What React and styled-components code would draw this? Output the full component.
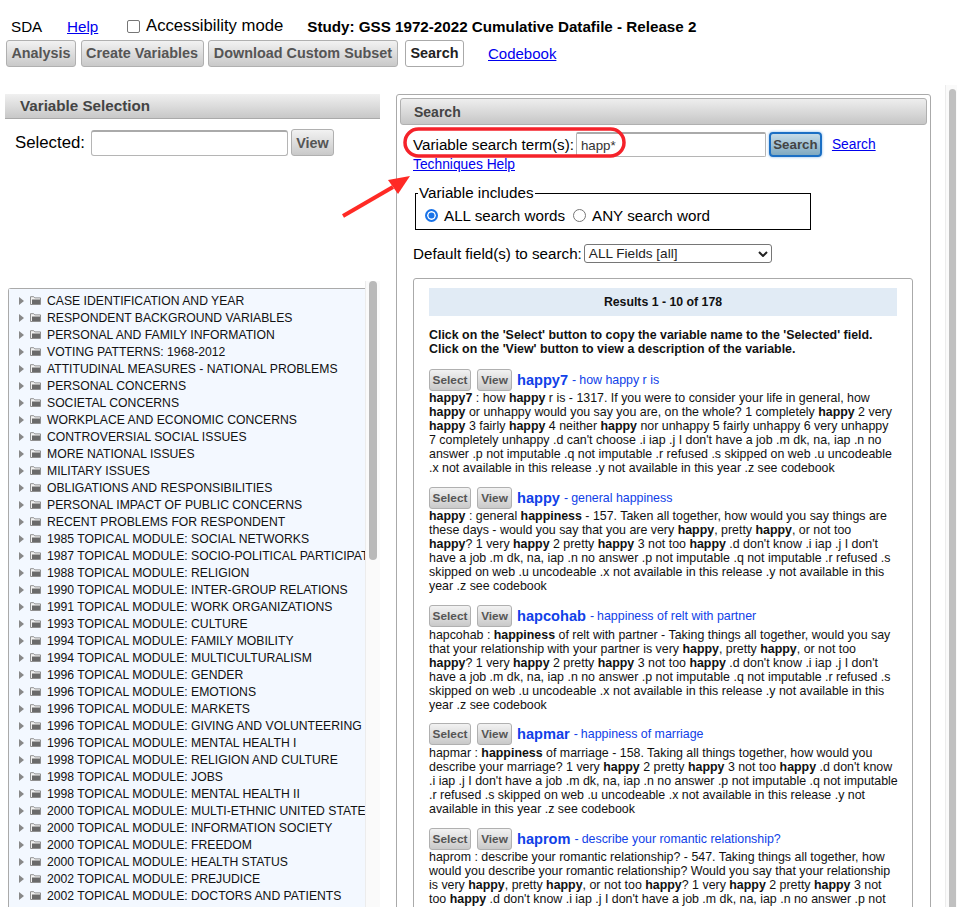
import React from 'react';
import styled, { createGlobalStyle } from 'styled-components';

const Global = createGlobalStyle`
  html, body { margin: 0; padding: 0; background: #fff; }
  body { font-family: "Liberation Sans", Arial, sans-serif; color: #000; }
  #root { width: 957px; height: 907px; overflow: hidden; }
`;
const Page = styled.div`
  position: relative; width: 957px; height: 907px; overflow: hidden; background: #fff;
`;
const TopLine = styled.div`
  display: flex; align-items: center; height: 20px; margin-top: 16px; padding-left: 11px; font-size: 15.2px;
`;
const Sda = styled.span` width: 56px; `;
const HelpLink = styled.a` color: #0000ee; text-decoration: underline; width: 60px; `;
const Check = styled.span`
  display: inline-block; width: 11px; height: 11px; border: 1px solid #767676; border-radius: 2px; background: #fff; margin-right: 6px;
`;
const AccessLabel = styled.span` font-size: 16.7px; `;
const Study = styled.b` margin-left: 24px; font-size: 15.2px; `;
const Tabs = styled.div`
  display: flex; align-items: center; margin-top: 3px; padding-left: 6px; gap: 4.5px; height: 28px;
`;
const GreyButton = styled.button`
  font-family: "Liberation Sans", Arial, sans-serif; font-weight: bold; color: #555; background: linear-gradient(#f2f2f2, #c9c9c9);
  border: 1px solid #b0b0b0; border-radius: 3px; padding: 0; margin: 0; white-space: nowrap;
  font-size: ${p => p.$fs || 14.4}px; width: ${p => p.$w}px; height: ${p => p.$h}px;
`;
const ActiveTab = styled(GreyButton)`
  background: #fff; color: #222; border-color: #aaa; margin-left: 2.5px;
`;
const CodebookLink = styled.a`
  color: #0000ee; text-decoration: underline; font-size: 15px; margin-left: 19.5px;
`;
const Columns = styled.div`
  display: flex; margin-top: 27px; align-items: flex-start;
`;
const Left = styled.div` width: 396px; flex: none; padding-left: 5px; box-sizing: border-box; `;
const Heading = styled.div`
  height: 25px; line-height: 24px; box-sizing: border-box; background: linear-gradient(#f0f0f0, #c8c8c8);
  border-bottom: 1px solid #aaa; font-size: 15.2px; font-weight: bold; color: #444; padding-left: 15px; width: 375px;
`;
const SelectedRow = styled.div`
  display: flex; align-items: center; margin-top: 10px; padding-left: 10px; height: 27px; font-size: 16.8px;
`;
const TextField = styled.span`
  display: inline-block; box-sizing: border-box; background: #fff; border: 1px solid #b5b5b5; border-top: 2px solid #aaa; border-radius: 3px;
  width: ${p => p.$w}px; height: ${p => p.$h}px; margin: 0 3px 0 6px;
`;
const Tree = styled.div`
  position: relative; margin-top: 132px; margin-left: 3px; width: 372px; height: 700px; box-sizing: border-box; display: flex;
  border: 1px solid #aaa; border-radius: 3px 0 0 0; border-right: none; border-bottom: none;
`;
const TreeList = styled.div`
  width: 357px; flex: none; background: #f3f8ff; padding-top: 3px; overflow: hidden; box-sizing: border-box;
`;
const TreeScroll = styled.div`
  position: absolute; top: -8px; right: 0; width: 15px; bottom: 0; background: #fafafa; border-left: 1px solid #ececec; box-sizing: border-box;
`;
const TreeThumb = styled.div`
  width: 8px; height: 279px; margin: 0 0 0 3px; border-radius: 4px; background: #b9b9b9;
`;
const TreeRow = styled.div`
  display: flex; align-items: center; height: 17px; white-space: nowrap; font-size: 12.2px; color: #111; padding-left: 10px;
`;
const Arrow = styled.span`
  width: 0; height: 0; border-left: 5px solid #888; border-top: 4px solid transparent; border-bottom: 4px solid transparent; margin-right: 6px; flex: none;
`;
const FolderSvg = styled.svg` flex: none; margin-right: 6px; `;
const Right = styled.div`
  width: 535px; flex: none; box-sizing: border-box; border: 1px solid #aaa; border-radius: 3px; padding: 3px; height: 850px; margin-top: 0;
`;
const SearchHeading = styled.div`
  height: 27px; line-height: 26px; box-sizing: border-box; background: linear-gradient(#eeeeee, #c6c6c6);
  border: 1px solid #b0b0b0; border-radius: 3px; font-size: 14px; font-weight: bold; color: #444; padding-left: 13px;
`;
const SearchBody = styled.div` padding: 0 13px; font-size: 15.2px; `;
const TermRow = styled.div`
  display: flex; align-items: center; height: 25px; margin-top: 7px;
`;
const TermInput = styled.span`
  display: block; box-sizing: border-box; width: 190px; height: 25px; margin-left: 2px; padding-left: 4px; line-height: 24px; font-size: 13.3px; color: #333;
  background: #fff; border: 1px solid #b5b5b5; border-top: 2px solid #aaa; border-radius: 2px;
`;
const FocusButton = styled(GreyButton)`
  margin-left: 3px; color: #444; background: linear-gradient(#c5dbe8, #7fa9c0); border: 2px solid #1b6fc4; box-shadow: 0 0 3px #7fb5ea; border-radius: 4px;
`;
const Link = styled.a` color: #0000ee; text-decoration: underline; font-size: 13.8px; `;
const SearchLink = styled(Link)` margin-left: 10px; `;
const TechniquesLine = styled.div` margin-top: -2px; `;
const Fieldset = styled.div`
  position: relative; box-sizing: border-box; width: 396px; height: 37px; margin: 21px 0 0 2px; border: 1px solid #000; display: flex; align-items: center; padding: 8px 0 0 9px;
`;
const Legend = styled.span`
  position: absolute; top: -9px; left: 2px; background: #fff; padding: 0 1px; line-height: 16px;
`;
const Radio = styled.span`
  display: inline-block; box-sizing: border-box; width: 13px; height: 13px; border-radius: 50%; margin-right: 6px; background: #fff;
  border: ${p => p.$on ? '2px solid #1a73e8' : '1px solid #767676'};
  box-shadow: ${p => p.$on ? 'inset 0 0 0 1.5px #fff' : 'none'};
  ${p => p.$on && 'background: #1a73e8;'}
`;
const RadioLabel = styled.span` margin-right: 8px; `;
const FieldRow = styled.div` display: flex; align-items: center; height: 19px; margin-top: 14px; `;
const SelectBox = styled.span`
  display: flex; align-items: center; justify-content: space-between; box-sizing: border-box; width: 188px; height: 19px; margin-left: 2px; padding: 0 3px 0 4px;
  font-size: 13.6px; border: 1px solid #767676; border-radius: 3px; background: #fff; color: #222;
`;
const Results = styled.div`
  margin-top: 15px; box-sizing: border-box; width: 500px; height: 640px; border: 1px solid #aaa; border-radius: 3px; padding: 9px 15px 0; font-size: 12.4px; line-height: 14px; color: #111;
`;
const ResultsBar = styled.div`
  background: #e1ebf5; height: 28px; line-height: 28px; text-align: center; font-weight: bold; font-size: 12.3px;
`;
const Intro = styled.div` margin-top: 12px; font-weight: bold; `;
const ResultBlock = styled.div` margin-top: ${p => p.$first ? 12 : 11.3}px; `;
const ResultHead = styled.div` display: flex; align-items: center; height: 23px; `;
const SelectBtn = styled(GreyButton)` margin-right: 6px; `;
const ViewBtn = styled(GreyButton)` margin-right: 5px; `;
const VarName = styled.b` color: #1041e8; font-size: 14.6px; `;
const VarDash = styled.span` color: #1041e8; margin: 0 3px 0 4px; `;
const VarDesc = styled.span` color: #1041e8; `;
const ResultText = styled.div` white-space: nowrap; `;
const Overlay = styled.svg` position: absolute; left: 0; top: 0; pointer-events: none; `;
const PageScroll = styled.div`
  position: absolute; top: 85px; right: 0; bottom: 0; width: 12px; background: #fafafa; border-left: 1px solid #ececec; box-sizing: border-box;
`;
const PageThumb = styled.div`
  position: absolute; left: 3px; width: 7px; top: 4px; bottom: 0; border-radius: 4px 4px 0 0; background: #c0c0c0;
`;

const topics = [
 'CASE IDENTIFICATION AND YEAR','RESPONDENT BACKGROUND VARIABLES','PERSONAL AND FAMILY INFORMATION','VOTING PATTERNS: 1968-2012','ATTITUDINAL MEASURES - NATIONAL PROBLEMS','PERSONAL CONCERNS','SOCIETAL CONCERNS','WORKPLACE AND ECONOMIC CONCERNS','CONTROVERSIAL SOCIAL ISSUES','MORE NATIONAL ISSUES','MILITARY ISSUES','OBLIGATIONS AND RESPONSIBILITIES','PERSONAL IMPACT OF PUBLIC CONCERNS','RECENT PROBLEMS FOR RESPONDENT','1985 TOPICAL MODULE: SOCIAL NETWORKS','1987 TOPICAL MODULE: SOCIO-POLITICAL PARTICIPATION','1988 TOPICAL MODULE: RELIGION','1990 TOPICAL MODULE: INTER-GROUP RELATIONS','1991 TOPICAL MODULE: WORK ORGANIZATIONS','1993 TOPICAL MODULE: CULTURE','1994 TOPICAL MODULE: FAMILY MOBILITY','1994 TOPICAL MODULE: MULTICULTURALISM','1996 TOPICAL MODULE: GENDER','1996 TOPICAL MODULE: EMOTIONS','1996 TOPICAL MODULE: MARKETS','1996 TOPICAL MODULE: GIVING AND VOLUNTEERING','1996 TOPICAL MODULE: MENTAL HEALTH I','1998 TOPICAL MODULE: RELIGION AND CULTURE','1998 TOPICAL MODULE: JOBS','1998 TOPICAL MODULE: MENTAL HEALTH II','2000 TOPICAL MODULE: MULTI-ETHNIC UNITED STATES','2000 TOPICAL MODULE: INFORMATION SOCIETY','2000 TOPICAL MODULE: FREEDOM','2000 TOPICAL MODULE: HEALTH STATUS','2002 TOPICAL MODULE: PREJUDICE','2002 TOPICAL MODULE: DOCTORS AND PATIENTS'
];

const results = [
 { name: 'happy7', desc: 'how happy r is', lines: [
  '*happy7* : how *happy* r is - 1317. If you were to consider your life in general, how',
  '*happy* or unhappy would you say you are, on the whole? 1 completely *happy* 2 very',
  '*happy* 3 fairly *happy* 4 neither *happy* nor unhappy 5 fairly unhappy 6 very unhappy',
  "7 completely unhappy .d can't choose .i iap .j I don't have a job .m dk, na, iap .n no",
  'answer .p not imputable .q not imputable .r refused .s skipped on web .u uncodeable',
  '.x not available in this release .y not available in this year .z see codebook'] },
 { name: 'happy', desc: 'general happiness', lines: [
  '*happy* : general *happiness* - 157. Taken all together, how would you say things are',
  'these days - would you say that you are very *happy*, pretty *happy*, or not too',
  "*happy*? 1 very *happy* 2 pretty *happy* 3 not too *happy* .d don't know .i iap .j I don't",
  'have a job .m dk, na, iap .n no answer .p not imputable .q not imputable .r refused .s',
  'skipped on web .u uncodeable .x not available in this release .y not available in this',
  'year .z see codebook'] },
 { name: 'hapcohab', desc: 'happiness of relt with partner', lines: [
  'hapcohab : *happiness* of relt with partner - Taking things all together, would you say',
  'that your relationship with your partner is very *happy*, pretty *happy*, or not too',
  "*happy*? 1 very *happy* 2 pretty *happy* 3 not too *happy* .d don't know .i iap .j I don't",
  'have a job .m dk, na, iap .n no answer .p not imputable .q not imputable .r refused .s',
  'skipped on web .u uncodeable .x not available in this release .y not available in this',
  'year .z see codebook'] },
 { name: 'hapmar', desc: 'happiness of marriage', lines: [
  'hapmar : *happiness* of marriage - 158. Taking all things together, how would you',
  "describe your marriage? 1 very *happy* 2 pretty *happy* 3 not too *happy* .d don't know",
  ".i iap .j I don't have a job .m dk, na, iap .n no answer .p not imputable .q not imputable",
  '.r refused .s skipped on web .u uncodeable .x not available in this release .y not',
  'available in this year .z see codebook'] },
 { name: 'haprom', desc: 'describe your romantic relationship?', lines: [
  'haprom : describe your romantic relationship? - 547. Taking things all together, how',
  'would you describe your romantic relationship? Would you say that your relationship',
  'is very *happy*, pretty *happy*, or not too *happy*? 1 very *happy* 2 pretty *happy* 3 not',
  "too *happy* .d don't know .i iap .j I don't have a job .m dk, na, iap .n no answer .p not"] },
];

const rich = (s) => s.split('*').map((part, i) => (i % 2 ? <b key={i}>{part}</b> : <React.Fragment key={i}>{part}</React.Fragment>));

const Folder = () => (
  <FolderSvg width="11" height="9" viewBox="0 0 11 9">
    <path d="M0.5 8.5V0.7h3.2l1 1.2h5.8v6.6z" fill="#f3f3f3" stroke="#8f8f8f" />
    <rect x="2" y="3.5" width="8" height="4.5" fill="#6a6a6a" />
  </FolderSvg>
);

export default function App() {
  return (
    <Page>
      <Global />
      <TopLine>
        <Sda>SDA</Sda>
        <HelpLink href="#">Help</HelpLink>
        <Check />
        <AccessLabel>Accessibility mode</AccessLabel>
        <Study>Study: GSS 1972-2022 Cumulative Datafile - Release 2</Study>
      </TopLine>
      <Tabs>
        <GreyButton $w={70} $h={27}>Analysis</GreyButton>
        <GreyButton $w={123} $h={27}>Create Variables</GreyButton>
        <GreyButton $w={190} $h={27}>Download Custom Subset</GreyButton>
        <ActiveTab $w={59} $h={27}>Search</ActiveTab>
        <CodebookLink href="#">Codebook</CodebookLink>
      </Tabs>
      <Columns>
        <Left>
          <Heading>Variable Selection</Heading>
          <SelectedRow>
            <span>Selected:</span>
            <TextField $w={197} $h={26} />
            <GreyButton $w={43} $h={27}>View</GreyButton>
          </SelectedRow>
          <Tree>
            <TreeList>
              {topics.map(t => (
                <TreeRow key={t}><Arrow /><Folder />{t}</TreeRow>
              ))}
            </TreeList>
            <TreeScroll><TreeThumb /></TreeScroll>
          </Tree>
        </Left>
        <Right>
          <SearchHeading>Search</SearchHeading>
          <SearchBody>
            <TermRow>
              <span>Variable search term(s):</span>
              <TermInput>happ*</TermInput>
              <FocusButton $w={53} $h={25} $fs={13.3}>Search</FocusButton>
              <SearchLink href="#">Search</SearchLink>
            </TermRow>
            <TechniquesLine><Link href="#">Techniques Help</Link></TechniquesLine>
            <Fieldset>
              <Legend>Variable includes</Legend>
              <Radio $on /><RadioLabel>ALL search words</RadioLabel>
              <Radio /><span>ANY search word</span>
            </Fieldset>
            <FieldRow>
              <span>Default field(s) to search:</span>
              <SelectBox>
                ALL Fields [all]
                <svg width="10" height="6" viewBox="0 0 10 6"><path d="M1 1l4 4 4-4" fill="none" stroke="#222" strokeWidth="2" /></svg>
              </SelectBox>
            </FieldRow>
            <Results>
              <ResultsBar>Results 1 - 10 of 178</ResultsBar>
              <Intro>
                Click on the 'Select' button to copy the variable name to the 'Selected' field.<br />
                Click on the 'View' button to view a description of the variable.
              </Intro>
              {results.map((r, i) => (
                <ResultBlock key={r.name} $first={i === 0}>
                  <ResultHead>
                    <SelectBtn $w={42} $h={22} $fs={11.8}>Select</SelectBtn>
                    <ViewBtn $w={35} $h={22} $fs={11.8}>View</ViewBtn>
                    <VarName>{r.name}</VarName>
                    <VarDash>-</VarDash>
                    <VarDesc>{r.desc}</VarDesc>
                  </ResultHead>
                  <ResultText>
                    {r.lines.map((l, j) => <div key={j}>{rich(l)}</div>)}
                  </ResultText>
                </ResultBlock>
              ))}
            </Results>
          </SearchBody>
        </Right>
      </Columns>
      <PageScroll><PageThumb /></PageScroll>
      <Overlay width="957" height="907" viewBox="0 0 957 907">
        <rect x="405" y="129" width="219" height="27" rx="13.5" fill="none" stroke="#f5222a" strokeWidth="3.5" />
        <path d="M343 216 L393 187" stroke="#ff2a25" strokeWidth="4" fill="none" />
        <path d="M410 176 L388 180 L398 194 Z" fill="#ff2a25" />
      </Overlay>
    </Page>
  );
}
